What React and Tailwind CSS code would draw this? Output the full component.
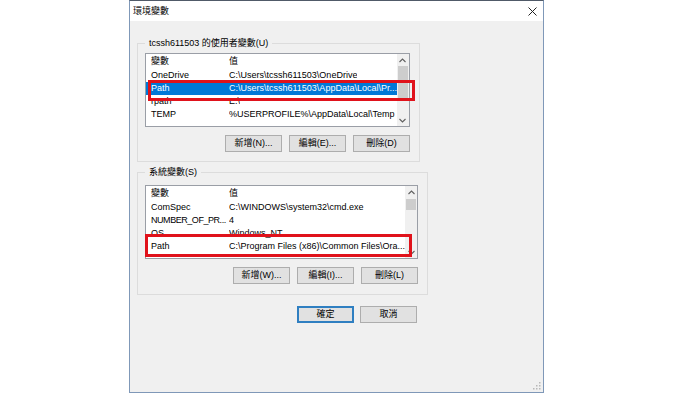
const userVars = [
  { name: 'OneDrive', value: 'C:\\Users\\tcssh611503\\OneDrive' },
  { name: 'Path', value: 'C:\\Users\\tcssh611503\\AppData\\Local\\Pr...', selected: true },
  { name: 'rpath', value: 'E:\\' },
  { name: 'TEMP', value: '%USERPROFILE%\\AppData\\Local\\Temp' },
];

const sysVars = [
  { name: 'ComSpec', value: 'C:\\WINDOWS\\system32\\cmd.exe' },
  { name: 'NUMBER_OF_PR...', value: '4', tight: true },
  { name: 'OS', value: 'Windows_NT' },
  { name: 'Path', value: 'C:\\Program Files (x86)\\Common Files\\Ora...' },
];

const Chevron = ({ up }) => (
  <svg width="7" height="5" viewBox="0 0 7 5" className="text-[#606060]">
    <path d={up ? 'M0.5 4 L3.5 1 L6.5 4' : 'M0.5 1 L3.5 4 L6.5 1'} fill="none" stroke="currentColor" strokeWidth="1.1" />
  </svg>
);

// lista tipo ListView de Windows
const VarList = ({ rows, thumbTop, thumbHeight, mark }) => (
  <div className="relative">
    <div className="h-[74px] border border-[#9a9ea6] bg-white flex overflow-hidden">
      <div className="flex-1 min-w-0">
        <div className="h-[15px] flex items-center pl-[5px]">
          <span className="w-[78px]">變數</span>
          <span>值</span>
        </div>
        {rows.map((r) => (
          <div
            key={r.name}
            className={`h-[13px] flex items-center pl-[5px] whitespace-nowrap ${
              r.selected ? 'bg-[#0078d7] text-white' : ''
            }`}
          >
            <span className={`w-[78px] shrink-0 ${r.tight ? 'tracking-[-0.45px]' : ''}`}>{r.name}</span>
            <span className="overflow-hidden">{r.value}</span>
          </div>
        ))}
      </div>
      <div className="w-[12px] bg-[#f0f0f0] flex flex-col items-center">
        <div className="h-[12px] flex items-center justify-center">
          <Chevron up />
        </div>
        <div className="flex-1 w-full px-[1px]">
          <div className="bg-[#cdcdcd] w-full" style={{ marginTop: thumbTop, height: thumbHeight }} />
        </div>
        <div className="h-[12px] flex items-center justify-center">
          <Chevron />
        </div>
      </div>
    </div>
    {/* marca roja encima */}
    <div
      className="absolute border-[3px] border-[#e0121b] pointer-events-none"
      style={mark}
    />
  </div>
);

const Btn = ({ children, primary }) => (
  <button
    className={`h-[17px] w-[57px] bg-[#e1e1e1] text-[9px] leading-none flex items-center justify-center ${
      primary ? 'border-2 border-[#2f7fc1]' : 'border border-[#adadad]'
    }`}
  >
    {children}
  </button>
);

export default function App() {
  return (
    <div className="w-[700px] h-[394px] bg-white overflow-hidden text-black text-[9px] leading-[13px] font-['Liberation_Sans','Noto_Sans_CJK_TC',sans-serif]">
      <div className="ml-[129px] w-[415px] h-[393px] flex flex-col border border-[#7f98b8] border-t-[#505a68] bg-[#f0f0f0]">
        <div className="h-[20px] bg-white flex items-center justify-between pl-[3px] pr-[6px]">
          <span>環境變數</span>
          <svg width="9" height="9" viewBox="0 0 9 9">
            <path d="M0.5 0.5 L8.5 8.5 M8.5 0.5 L0.5 8.5" stroke="#222" strokeWidth="1" />
          </svg>
        </div>

        <div className="flex-1 flex flex-col pl-[7px] pt-[16px] relative">
          <fieldset className="w-[281px] border border-[#dcdcdc] pl-[7px] pr-[9px] pt-[4px] pb-[9px]">
            <legend className="px-[4px] leading-[12px]">tcssh611503 的使用者變數(U)</legend>
            <VarList
              rows={userVars}
              thumbTop={0}
              thumbHeight={32}
              mark={{ left: 3, top: 27, width: 267, height: 21 }}
            />
            <div className="flex justify-end gap-[7px] mt-[8px]">
              <Btn>新增(N)...</Btn>
              <Btn>編輯(E)...</Btn>
              <Btn>刪除(D)</Btn>
            </div>
          </fieldset>

          <fieldset className="w-[281px] mt-[4px] border border-[#dcdcdc] pl-[7px] pr-[9px] pt-[7px] pb-[10px]">
            <legend className="px-[4px] leading-[12px]">系統變數(S)</legend>
            <VarList
              rows={sysVars}
              thumbTop={1}
              thumbHeight={11}
              mark={{ left: 0, top: 49, width: 267, height: 23 }}
            />
            <div className="flex justify-end gap-[7px] mt-[8px]">
              <Btn>新增(W)...</Btn>
              <Btn>編輯(I)...</Btn>
              <Btn>刪除(L)</Btn>
            </div>
          </fieldset>

          <div className="w-[281px] flex justify-end gap-[6px] mt-[11px] pr-[1px]">
            <Btn primary>確定</Btn>
            <Btn>取消</Btn>
          </div>

          <svg width="8" height="8" viewBox="0 0 8 8" className="absolute right-[2px] bottom-[2px]">
            <rect x="6" y="0" width="1.5" height="1.5" fill="#b8b8b8" />
            <rect x="3" y="3" width="1.5" height="1.5" fill="#b8b8b8" />
            <rect x="6" y="3" width="1.5" height="1.5" fill="#b8b8b8" />
            <rect x="0" y="6" width="1.5" height="1.5" fill="#b8b8b8" />
            <rect x="3" y="6" width="1.5" height="1.5" fill="#b8b8b8" />
            <rect x="6" y="6" width="1.5" height="1.5" fill="#b8b8b8" />
          </svg>
        </div>
      </div>
    </div>
  );
}
